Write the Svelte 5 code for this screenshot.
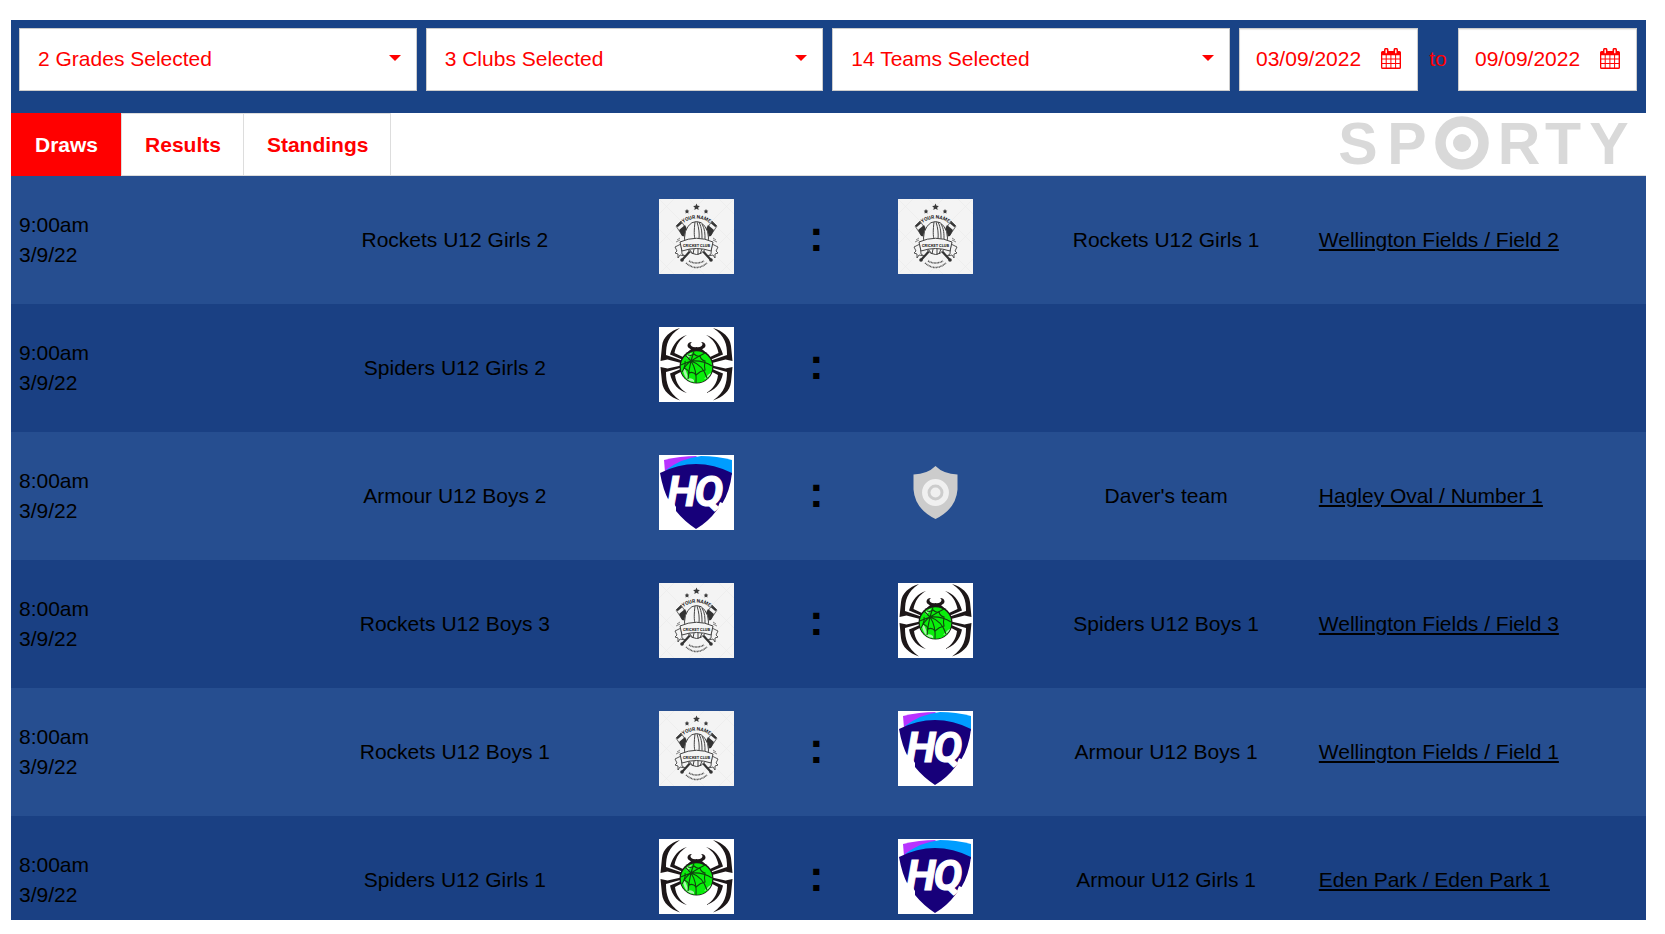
<script>
  const filters = [
    { id: 'grades', label: 'Grades', text: '2 Grades Selected' },
    { id: 'clubs', label: 'Clubs', text: '3 Clubs Selected' },
    { id: 'teams', label: 'Teams', text: '14 Teams Selected' }
  ];

  const tabs = ['Draws', 'Results', 'Standings'];
  let activeTab = $state('Draws');

  let fromDate = $state('03/09/2022');
  let toDate = $state('09/09/2022');

  const matches = [
    { time: '9:00am', date: '3/9/22', home: 'Rockets U12 Girls 2', homeLogo: 'rockets', away: 'Rockets U12 Girls 1', awayLogo: 'rockets', venue: 'Wellington Fields / Field 2' },
    { time: '9:00am', date: '3/9/22', home: 'Spiders U12 Girls 2', homeLogo: 'spiders', away: '', awayLogo: '', venue: '' },
    { time: '8:00am', date: '3/9/22', home: 'Armour U12 Boys 2', homeLogo: 'armour', away: "Daver's team", awayLogo: 'default', venue: 'Hagley Oval / Number 1' },
    { time: '8:00am', date: '3/9/22', home: 'Rockets U12 Boys 3', homeLogo: 'rockets', away: 'Spiders U12 Boys 1', awayLogo: 'spiders', venue: 'Wellington Fields / Field 3' },
    { time: '8:00am', date: '3/9/22', home: 'Rockets U12 Boys 1', homeLogo: 'rockets', away: 'Armour U12 Boys 1', awayLogo: 'armour', venue: 'Wellington Fields / Field 1' },
    { time: '8:00am', date: '3/9/22', home: 'Spiders U12 Girls 1', homeLogo: 'spiders', away: 'Armour U12 Girls 1', awayLogo: 'armour', venue: 'Eden Park / Eden Park 1' }
  ];
</script>

{#snippet logo(name)}
  {#if name === 'rockets'}
    <svg class="logo" viewBox="0 0 75 75" aria-hidden="true">
      <rect width="75" height="75" fill="#f4f4f4"/>
      <path d="M0 15L15 0M0 45L45 0M0 75L75 0M30 75L75 30M60 75L75 60M0 60L15 75M0 30L45 75M0 0L75 75M30 0L75 45M60 0L75 15" stroke="#ebebeb" stroke-width=".7"/>
      <g fill="#3a3a3a">
        <path d="M37.500 4.500l1 2.300 2.400.2-1.800 1.700.6 2.400-2.200-1.300-2.200 1.300.6-2.400-1.800-1.700 2.400-.2z"/>
        <path d="M28 10l.8 1.500 1.500.2-1.100 1.100.3 1.700-1.500-.8-1.500.8.3-1.700-1.100-1.100 1.500-.2zM47 10l.8 1.500 1.500.2-1.100 1.100.3 1.700-1.500-.8-1.500.8.3-1.700-1.100-1.100 1.500-.2z"/>
      </g>
      <path d="M34 49L23 61M41 49l11 12" stroke="#333" stroke-width="2.200"/>
      <circle cx="23" cy="61" r="1.800" fill="#333"/>
      <circle cx="52" cy="61" r="1.800" fill="#333"/>
      {#each ['', 'translate(75 0) scale(-1 1)'] as flip}
        <g transform={flip}>
          <path d="M17 27l5-5 6 9-1 6-4-1z" fill="#f4f4f4" stroke="#444" stroke-width=".8"/>
          <path d="M20 31l6-5 3 6-1 6-5-1zM17.500 26.500l4.500-4 1.200 1.700-4.600 4z" fill="#333"/>
          <path d="M16 48l6-3 1 10 3 2-5-1-2 3v-4l-3-1 2-2z" fill="#f4f4f4" stroke="#444" stroke-width=".9"/>
        </g>
      {/each}
      <ellipse cx="37.500" cy="39" rx="12" ry="16.500" fill="#f4f4f4" stroke="#444" stroke-width="1"/>
      <path d="M36 23c-1 8-1 14 0 17M38 23c2 6 2.500 12 2 17M40 23c3 6 3 12 3 17M43 25c3 5 3 10 3 15M35 50l-1 5M39 49v7M43 50l-2 5M30 50l4 5" fill="none" stroke="#444" stroke-width="1"/>
      <path d="M21 43q16.500-7.500 33 0l-2 9q-14.500-5-29 0z" fill="#f4f4f4" stroke="#444" stroke-width="1"/>
      <path id="club-top" d="M23 25q14.500-11 29 0" fill="none"/>
      <g font-family="Roboto, sans-serif" fill="#222" text-anchor="middle" font-weight="700">
        <text x="37.500" y="48" font-size="4">CRICKET CLUB</text>
        <text font-size="5"><textPath href="#club-top" startOffset="50%">YOUR NAME</textPath></text>
      </g>
      <path d="M30 62q7.500 4 15 0M27 64q10.500 9 21 0" fill="none" stroke="#555" stroke-width="1.500" stroke-dasharray="1 .5"/>
      <path d="M17 43l4-2M54 41l4 2M18 41l3-2M54 39l3 2" stroke="#777" stroke-width=".9"/>
    </svg>
  {:else if name === 'spiders'}
    <svg class="logo" viewBox="0 0 75 75" aria-hidden="true">
      <rect width="75" height="75" fill="#fff"/>
      <g fill="#1d1718">
        {#each ['', 'translate(75 0) scale(-1 1)'] as flip}
          <g transform={flip}>
            <path d="M21 1C11 4 4 10 3 19L1.500 34l7-1.500L22 36l1-2.500L7 28C7 17 9 9 21 1z"/>
            <path d="M28 8C20 10 14 17 11 27.500l12 5 2-2L15.500 26C17 18 21 12 28 8z"/>
            <path d="M21 73.500C11 70 4 64 3 55L1.500 40l7 1.500L22 38.500l1 2L7 45c0 11 2 20 14 28.500z"/>
            <path d="M28 66C20 64 13 57 11 46.500l12-5 1.500 2L16 48c1 8 5 14 12 18z"/>
            <path d="M36 23c-5-.5-7.500-2.500-7.500-4.500S30 15.200 33 15c-2.500 1.500-2 4.500 3 5.500z"/>
          </g>
        {/each}
        <path d="M28 26q9.500-12 19 0z"/>
        <circle cx="37.500" cy="39.500" r="17"/>
      </g>
      <circle cx="37.500" cy="40" r="15.800" fill="#09ee0b"/>
      <path d="M24 43q2-3 4 4 2 5 0 5-3-3-4-9zM28 52q4-2 7 1v2q-4 0-7-3zM45 52l5-5 2-1q-2 5-7 6zM27 29l5-3 1 1-5 5z" fill="#a6f7a7"/>
      <path d="M32 34L21.500 38M32 34l-6-6M32 34l3-10M32 34q8-5 14-8M32 34q12-1 21 5M32 34q12 4 16 17M32 34q6 9 5 22M32 34q-2 8-3 18M32 34q-5 3-9 11" fill="none" stroke="#10420f" stroke-width="1.100"/>
      <path d="M29 28q4 1 6-1 3 3 6 2 1 4 5 5-1 5 0 9-5 1-9 5-3-4-7-2 0-3-5-5 2-4 1-7" fill="none" stroke="#10420f" stroke-width="1.100"/>
    </svg>
  {:else if name === 'armour'}
    <svg class="logo" viewBox="0 0 75 75" aria-hidden="true">
      <rect width="75" height="75" fill="#fff"/>
      <path d="M5 5Q21 1 38 1l-8 9-24 7z" fill="#b833ff"/>
      <path d="M7 15Q23 3 42 1q16 0 31 4v15z" fill="#009dff"/>
      <path d="M1 18Q37 0 73 18 71 36 63 49l-5 6Q49 67 37 74 25 66 17 56L10 46Q4 35 1 18z" fill="#17007a"/>
      <path d="M8 46l3-4 6 10v4H9zM59 52l2-5 5 2-2 6z" fill="#fff"/>
      <g font-family="Roboto, sans-serif" font-size="43" font-weight="700" font-style="italic" fill="#fff" stroke="#fff" stroke-width="1" text-anchor="middle">
        <text x="23" y="51">H</text>
        <text x="50" y="51">Q</text>
      </g>
    </svg>
  {:else if name === 'default'}
    <svg class="logo" viewBox="0 0 75 75" aria-hidden="true">
      <path d="M37.500 11q8 8 22 8.500v15Q58 54 37.500 64 17 54 15.500 34.500v-15Q29.500 19 37.500 11z" fill="#ccc"/>
      <circle cx="37.500" cy="37.500" r="10.700" fill="none" stroke="#f0f0f0" stroke-width="5.500"/>
      <circle cx="37.500" cy="37.500" r="5" fill="#f0f0f0"/>
    </svg>
  {/if}
{/snippet}

{#snippet calendar()}
  <svg width="20" height="22" viewBox="0 0 20 22" aria-hidden="true">
    <path fill="currentColor" fill-rule="evenodd" d="M1.500 3H3V2a2 2 0 0 1 4.500 0v1h5V2A2 2 0 0 1 17 2v1h1.500A1.500 1.500 0 0 1 20 4.500v15a1.500 1.500 0 0 1-1.500 1.500h-17A1.500 1.500 0 0 1 0 19.500v-15A1.500 1.500 0 0 1 1.500 3zM1.300 7.300v3.200h3.400V7.300zm4.400 0v3.200h3.700V7.300zm4.700 0v3.200h3.700V7.300zm4.700 0v3.200h3.500V7.300zM1.300 11.400v3.500h3.400v-3.500zm4.400 0v3.500h3.700v-3.500zm4.700 0v3.500h3.700v-3.500zm4.700 0v3.500h3.500v-3.500zM1.300 15.900v3.700h3.400v-3.700zm4.400 0v3.700h3.700v-3.700zm4.700 0v3.700h3.700v-3.700zm4.700 0v3.700h3.500v-3.700zM4.500 1.500v3.800h1.400V1.500zM14.100 1.500v3.800h1.400V1.500z"/>
  </svg>
{/snippet}

<div class="widget">
  <div class="filters">
    {#each filters as f}
      <div class="select-box">
        <select id={f.id} aria-label={f.label}>
          <option>{f.text}</option>
        </select>
        <span class="caret"></span>
      </div>
    {/each}
    <div class="date-box">
      <input type="text" aria-label="From date" bind:value={fromDate} />
      <button class="cal-btn" aria-label="Choose from date">{@render calendar()}</button>
    </div>
    <span class="to">to</span>
    <div class="date-box">
      <input type="text" aria-label="To date" bind:value={toDate} />
      <button class="cal-btn" aria-label="Choose to date">{@render calendar()}</button>
    </div>
  </div>

  <div class="tab-bar">
    <div class="tabs" role="tablist">
      {#each tabs as tab}
        <button class="tab" class:active={activeTab === tab} role="tab" aria-selected={activeTab === tab} onclick={() => (activeTab = tab)}>{tab}</button>
      {/each}
    </div>
    <svg class="brand" width="300" height="82" viewBox="0 -10 300 82" role="img" aria-label="Sporty">
      <g font-family="'Liberation Sans', Arial, sans-serif" font-size="59" font-weight="700" fill="#d9d9d9" text-anchor="middle">
        <text x="24" y="51">S</text>
        <text x="73" y="51">P</text>
        <text x="185" y="51">R</text>
        <text x="229" y="51">T</text>
        <text x="275" y="51">Y</text>
      </g>
      <circle cx="128" cy="30" r="21.500" fill="none" stroke="#d9d9d9" stroke-width="10.500"/>
      <circle cx="128" cy="30" r="9" fill="#d9d9d9"/>
    </svg>
  </div>

  <table class="draws">
    <colgroup>
      <col class="c-time" />
      <col class="c-home" />
      <col class="c-logo" />
      <col class="c-sep" />
      <col class="c-logo" />
      <col class="c-away" />
      <col />
    </colgroup>
    <tbody>
      {#each matches as m}
        <tr>
          <td>{m.time}<br />{m.date}</td>
          <td class="team">{m.home}</td>
          <td class="crest">{@render logo(m.homeLogo)}</td>
          <td class="sep">:</td>
          <td class="crest">{@render logo(m.awayLogo)}</td>
          <td class="team">{m.away}</td>
          <td>{#if m.venue}<a href="#venue">{m.venue}</a>{/if}</td>
        </tr>
      {/each}
    </tbody>
  </table>
</div>

<style>
  :global(body){
    margin:0;
    background:#fff;
    overflow:hidden;
  }

  .widget{
    height:calc(100vh - 34px);
    margin:20px 19px 14px 11px;
    overflow:hidden;
    background:#194386;
    font-family:"Liberation Sans", Arial, sans-serif;
    font-size:21px;
    line-height:30px;
    color:#000;
  }

  .filters{
    display:flex;
    gap:9px;
    padding:8px 9px 22px 8px;
    color:#f00;
  }
  .select-box{
    position:relative;
    flex:1;
    height:63px;
  }
  select, input, button{
    font:inherit;
    color:inherit;
    border:0;
    border-radius:0;
    margin:0;
  }
  select{
    appearance:none;
    width:100%;
    height:100%;
    padding:0 40px 1px 18px;
    background:#fff;
    border:1px solid #ccc;
  }
  .caret{
    position:absolute;
    right:16px;
    top:27px;
    border:6px solid transparent;
    border-top-color:#f00;
    border-bottom:0;
    pointer-events:none;
  }
  .date-box{
    display:flex;
    align-items:center;
    box-sizing:border-box;
    width:179px;
    height:63px;
    padding:0 16px 1px;
    background:#fff;
    border:1px solid #ccc;
    box-shadow:inset 0 1px 1px rgba(0,0,0,0.08);
  }
  .date-box input{
    flex:1;
    min-width:0;
    padding:0;
    background:none;
  }
  .cal-btn{
    display:flex;
    padding:0;
    background:none;
    cursor:pointer;
  }
  .to{
    width:22px;
    line-height:62px;
    text-align:center;
  }

  .tab-bar{
    display:flex;
    justify-content:space-between;
    align-items:center;
    box-sizing:border-box;
    height:63px;
    padding-right:12px;
    background:#fff;
    border-bottom:1px solid #ddd;
  }
  .tabs{ display:flex; align-self:stretch; margin-bottom:-1px; }
  .tab{
    padding:0 22px 0 23px;
    background:#fff;
    border:1px solid #ddd;
    border-left:0;
    color:#f00;
    font-weight:700;
    cursor:pointer;
  }
  .tab.active{
    background:#f00;
    border:1px solid #f00;
    color:#fff;
  }
  .tab.active + .tab{ border-left:1px solid #ddd; }

  .draws{
    width:100%;
    table-layout:fixed;
    border-collapse:collapse;
  }
  .c-time{ width:17.6%; }
  .c-home{ width:19.1%; }
  .c-logo{ width:10.5%; }
  .c-sep{ width:4.1%; }
  .c-away{ width:17.7%; }
  tr{ height:128px; background:#1a4083; }
  tr:nth-child(odd){ background:#264e90; }
  td{ padding:0 8px; vertical-align:middle; }
  .team{ text-align:center; }
  .crest{ padding-bottom:7px; }
  .logo{
    display:block;
    width:75px;
    height:75px;
    margin:0 auto;
  }
  .sep{
    padding:0 0 8px;
    text-align:center;
    font-size:44px;
    font-weight:700;
  }
  a{
    color:#000;
    text-decoration:underline;
  }
</style>
